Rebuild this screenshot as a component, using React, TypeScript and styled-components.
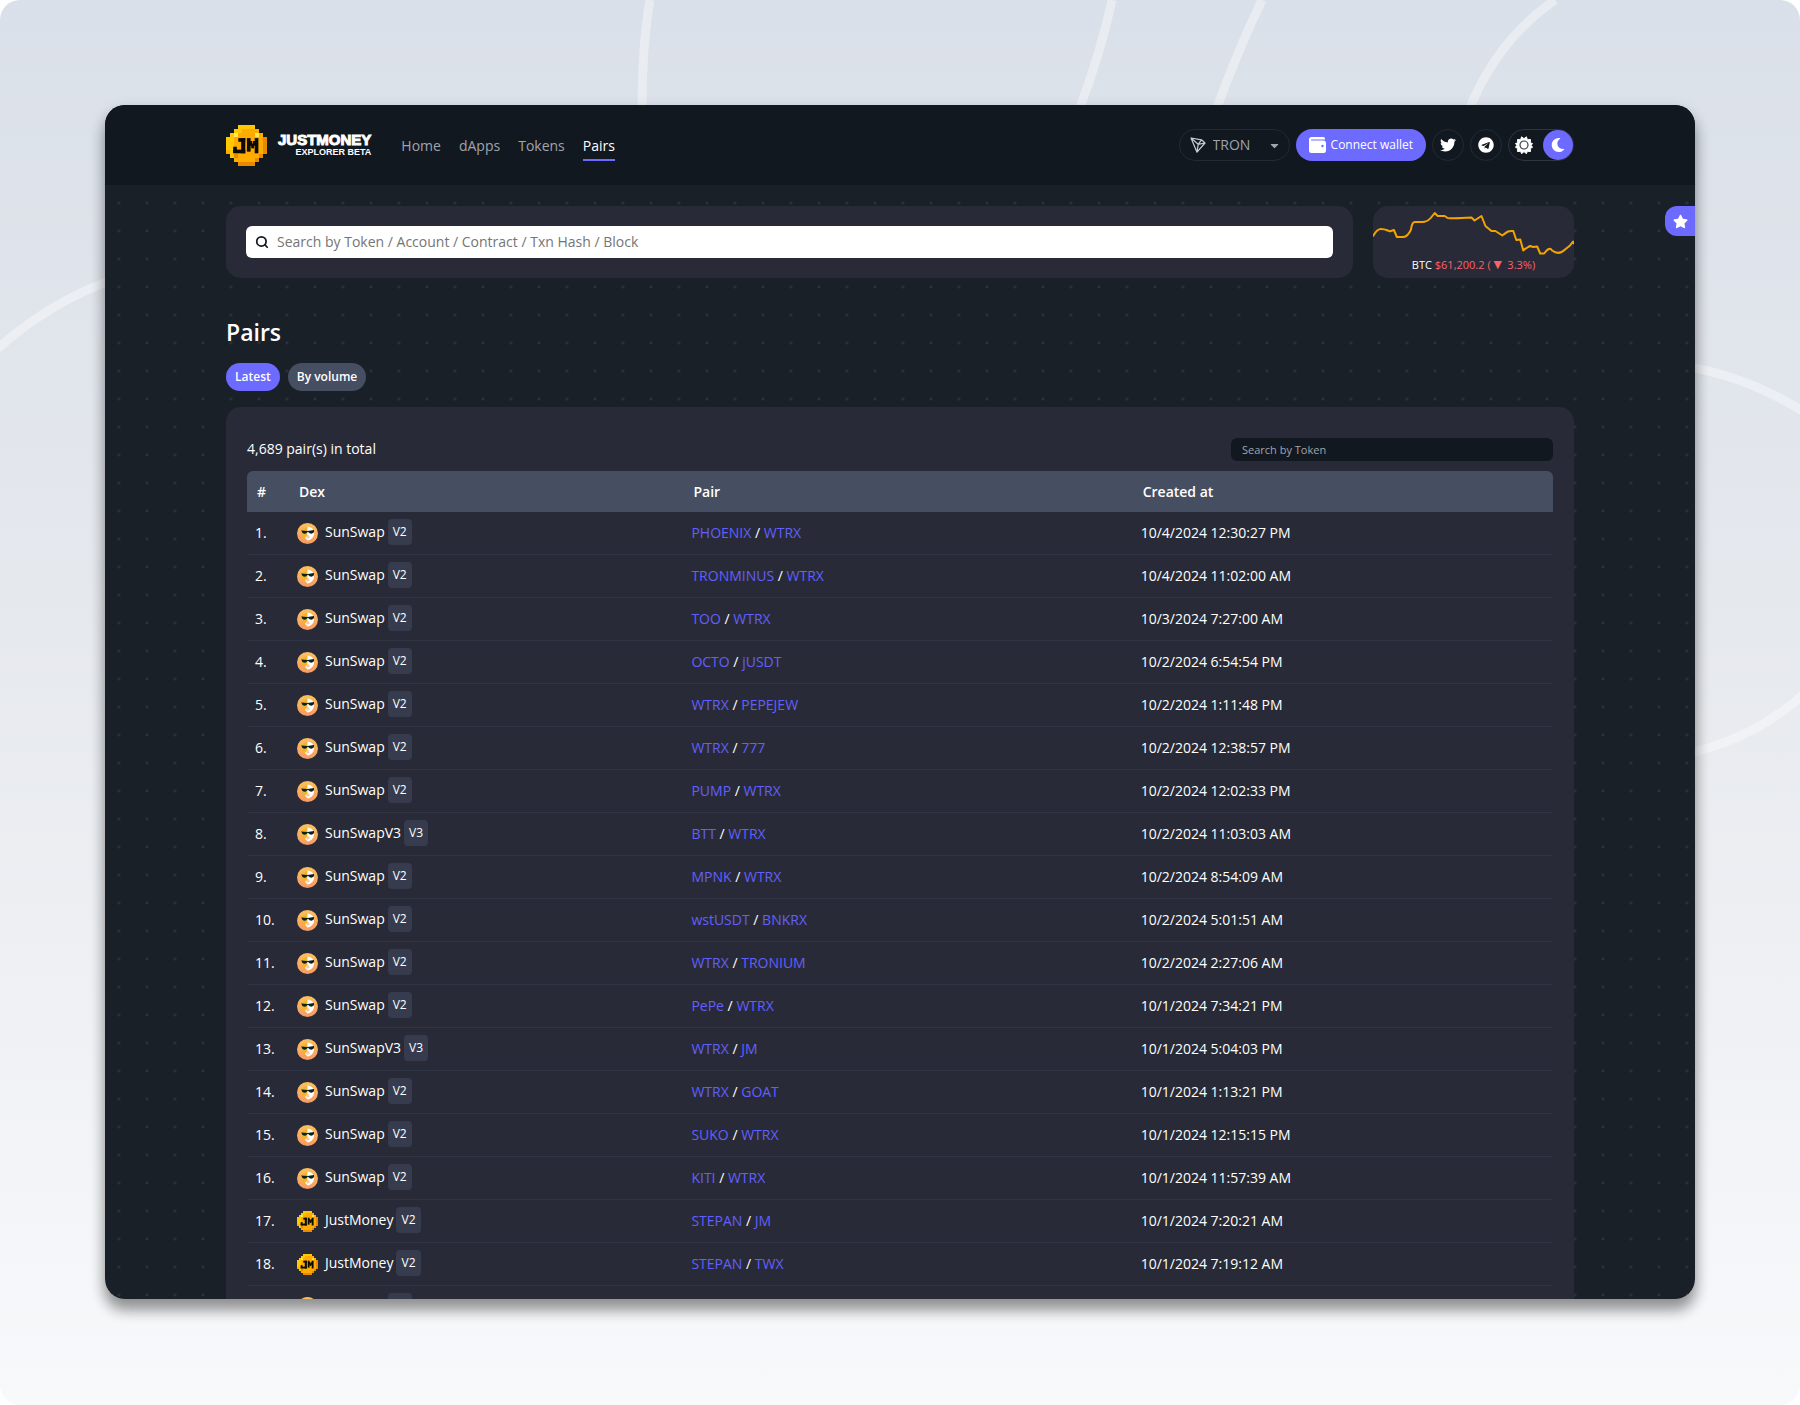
import React from "react";
import styled, { createGlobalStyle } from "styled-components";
import { FaTwitter, FaTelegram, FaMoon, FaStar, FaCaretDown } from "react-icons/fa";
import { Search } from "lucide-react";

const Global = createGlobalStyle`
  * { box-sizing: border-box; }
  html { background: #fff; }
  body { margin: 0; font-family: "Open Sans", "Noto Sans", sans-serif; font-size: 14px; line-height: 20px; color: #fff; }
  button, input, select { font: inherit; }
  a { text-decoration: none; }
`;

const Backdrop = styled.div`
  position: relative;
  overflow: hidden;
  height: 100vh;
  padding: 105px 105px 106px;
  border-radius: 20px;
  background: linear-gradient(180deg, #dae0e9 0%, #e6e9ee 45%, #f8f9fb 100%);
`;

const Waves = styled.svg`
  position: absolute;
  inset: 0;
  width: 100%;
  height: 100%;
`;

const WindowShadow = styled.div`
  position: relative;
  height: 100%;
  border-radius: 20px;
  box-shadow: 0 12px 14px rgba(0, 0, 0, 0.3), 0 6px 16px rgba(0, 0, 0, 0.2);
`;

const Window = styled.div`
  position: relative;
  height: 100%;
  overflow: hidden;
  border-radius: 20px;
  background-color: #1a2028;
  background-image: radial-gradient(circle, #29303b 1px, transparent 2px);
  background-size: 28px 28px;
  background-position: 0 84px;
`;

const Header = styled.header`
  height: 80px;
  padding: 0 121px;
  display: flex;
  align-items: center;
  justify-content: space-between;
  background: #121820;
`;

const HeaderGroup = styled.div<{ $gap: number }>`
  display: flex;
  align-items: center;
  gap: ${(p) => p.$gap}px;
`;

const Brand = styled.a`
  display: flex;
  align-items: center;
  gap: 11px;
  color: #fff;
`;

const Wordmark = styled.span`
  display: flex;
  flex-direction: column;
  align-items: flex-end;
  font-family: "Liberation Sans", Arial, sans-serif;
  font-weight: 700;
`;

const WordTop = styled.span`
  font-size: 15px;
  line-height: 14px;
  -webkit-text-stroke: 1px #fff;
`;

const WordSub = styled.span`
  font-size: 9px;
  line-height: 11px;
`;

const Nav = styled.nav`
  display: flex;
  gap: 18px;
`;

const NavLink = styled.a<{ $active?: boolean }>`
  padding: 6px 0 3px;
  color: ${(p) => (p.$active ? "#fff" : "#a0a4ad")};
  border-bottom: 2px solid ${(p) => (p.$active ? "#6c6aff" : "transparent")};
`;

const ChainBox = styled.label`
  display: flex;
  align-items: center;
  width: 111px;
  height: 32px;
  padding: 0 8px 0 10px;
  border: 1px solid #242a33;
  border-radius: 16px;
  color: #a0a4ad;
`;

const ChainSelect = styled.select`
  flex: 1;
  min-width: 0;
  margin-left: 7px;
  padding: 0;
  border: 0;
  outline: 0;
  appearance: none;
  background: transparent;
  color: inherit;
`;

const WalletButton = styled.button`
  display: flex;
  align-items: center;
  gap: 5px;
  height: 32px;
  padding: 0 13px;
  border: 0;
  border-radius: 16px;
  background: #6c6aff;
  color: #fff;
  font-size: 12px;
`;

const RoundLink = styled.a`
  display: flex;
  align-items: center;
  justify-content: center;
  width: 32px;
  height: 32px;
  border: 1px solid #242a33;
  border-radius: 50%;
  color: #fff;
`;

const ThemeSwitch = styled.div`
  display: flex;
  align-items: center;
  justify-content: space-between;
  width: 66px;
  height: 32px;
  border: 1px solid #303640;
  border-radius: 16px;
`;

const ThemeButton = styled.button<{ $on?: boolean }>`
  display: flex;
  align-items: center;
  justify-content: center;
  width: 30px;
  height: 30px;
  padding: 0;
  border: 0;
  border-radius: 50%;
  background: ${(p) => (p.$on ? "#6c6aff" : "transparent")};
  color: #fff;
`;

const Main = styled.main`
  padding: 21px 121px 0;
`;

const TopRow = styled.div`
  display: flex;
  gap: 20px;
`;

const SearchCard = styled.form`
  flex: 1;
  height: 72px;
  padding: 20px;
  border-radius: 15px;
  background: #282b37;
`;

const SearchBox = styled.label`
  display: flex;
  align-items: center;
  gap: 8px;
  height: 32px;
  padding: 0 9px;
  border-radius: 6px;
  background: #fff;
  color: #151a22;
`;

const SearchInput = styled.input`
  flex: 1;
  padding: 0;
  border: 0;
  outline: 0;
  background: transparent;
  color: #151a22;
  &::placeholder { color: #757575; opacity: 1; }
`;

const TickerCard = styled.div`
  display: flex;
  flex-direction: column;
  width: 201px;
  height: 72px;
  border-radius: 15px;
  overflow: hidden;
  background: #282b37;
  font-size: 11px;
  line-height: 18px;
  text-align: center;
`;

const Down = styled.span`
  color: #ff5f68;
`;

const Triangle = styled.span`
  font-size: 14px;
  line-height: 14px;
`;

const FavTab = styled.button`
  position: absolute;
  top: 101px;
  right: 0;
  display: flex;
  align-items: center;
  justify-content: center;
  width: 30px;
  height: 30px;
  padding: 0;
  border: 0;
  border-radius: 12px 0 0 12px;
  background: #6c6aff;
  color: #fff;
`;

const Title = styled.h1`
  margin: 37px 0 14px;
  font-size: 23px;
  line-height: 34px;
  font-weight: 600;
`;

const Tabs = styled.div`
  display: flex;
  gap: 8px;
  margin-bottom: 16px;
`;

const Tab = styled.button<{ $active?: boolean }>`
  height: 28px;
  padding: 0 9px;
  border: 0;
  border-radius: 14px;
  background: ${(p) => (p.$active ? "#6c6aff" : "#464e62")};
  color: #fff;
  font-size: 12px;
  font-weight: 600;
`;

const Panel = styled.section`
  padding: 30px 21px;
  border-radius: 15px;
  background: #282b37;
`;

const PanelHead = styled.div`
  display: flex;
  align-items: center;
  justify-content: space-between;
  height: 24px;
  margin-bottom: 10px;
`;

const TokenInput = styled.input`
  width: 322px;
  height: 23px;
  padding: 0 11px;
  border: 0;
  outline: 0;
  border-radius: 6px;
  background: #121820;
  color: #fff;
  font-size: 11px;
  &::placeholder { color: #a0a4ad; opacity: 1; }
`;

const Table = styled.table`
  width: 100%;
  table-layout: fixed;
  border-collapse: separate;
  border-spacing: 0;
`;

const Th = styled.th<{ $w?: string }>`
  width: ${(p) => p.$w ?? "auto"};
  height: 41px;
  padding: 0 10px;
  background: #464e62;
  font-weight: 600;
  text-align: left;
  &:first-child { border-top-left-radius: 6px; }
  &:last-child { border-top-right-radius: 6px; }
`;

const Td = styled.td`
  height: 43px;
  padding: 0 8px;
  border-bottom: 1px solid #30354a;
  border-bottom-color: #303543;
  white-space: nowrap;
`;

const Dex = styled.div`
  display: flex;
  align-items: center;
`;

const DexName = styled.span`
  margin: 0 3px 2px 7px;
`;

const Version = styled.span`
  height: 26px;
  margin-bottom: 2px;
  padding: 0 5px;
  border-radius: 4px;
  background: #363c4e;
  font-size: 12px;
  line-height: 26px;
`;

const TokenLink = styled.a`
  color: #625fff;
`;

const JMCoin = ({ size }: { size: number }) => (
  <svg width={size} height={size} viewBox="0 0 20 20" aria-hidden="true">
    <g shapeRendering="crispEdges">
      <path fill="#ffab00" d="M6 0h8v2h2v2h2v2h2v8h-2v2h-2v2h-2v2H6v-2H4v-2H2v-2H0V6h2V4h2V2h2z" />
      <path fill="#ffc800" d="M6 0h8v2H6zM4 2h4v2H6v2H4v8H2v2h2v-2H2v-2H0V6h2V4h2z" />
      <path fill="#e88a00" d="M18 6h2v8h-2v2h-2v2h-2v2H6v-2h8v-2h2v-2h2zM4 14h2v2H4z" />
      <path fill="#ffe94d" d="M4 4h2v2H4zM14 4h2v2h-2z" />
    </g>
    <g fill="#0b0b0b">
      <rect x="6" y="6.400" width="3.400" height="1.800" />
      <rect x="7.400" y="6.400" width="2" height="7.400" />
      <rect x="3.500" y="12" width="5.900" height="1.800" />
      <rect x="3.500" y="10.600" width="1.800" height="3" />
      <rect x="10.200" y="6.400" width="1.800" height="6.600" />
      <rect x="14" y="6.400" width="1.800" height="7.400" />
      <rect x="11.400" y="7.800" width="1.400" height="2.400" />
      <rect x="13.200" y="7.800" width="1.400" height="2.400" />
      <rect x="12.300" y="9" width="1.400" height="2.400" />
    </g>
  </svg>
);

const SunSwapLogo = () => (
  <svg width="21" height="21" viewBox="0 0 21 21" aria-hidden="true">
    <defs>
      <linearGradient id="sun" x1="0" y1="0" x2="0" y2="1">
        <stop offset="0" stopColor="#fcc15c" />
        <stop offset="1" stopColor="#f79a63" />
      </linearGradient>
    </defs>
    <circle cx="10.500" cy="10.500" r="10.500" fill="url(#sun)" />
    <path fill="#f4b32c" d="M10.500 3.500L5 6.500v6l3 4 2.500-2z" />
    <path fill="#fff" d="M10.500 3.500c4 .3 6.500 3 6.500 6.800 0 4-3 6.700-6.500 7.200L8 14.800l2.500-2z" />
    <path fill="#ffc9a0" d="M8.500 13.500l3-1.500 1.500 2.200-2.500 1.800z" />
    <path fill="#07231f" d="M4 7.500l6.500.6 6.500-1.100v1.500c-.3 2.300-4 3-5.500.8l-1-.5c-1.200 2.700-5.400 2.300-5.700-.3z" />
  </svg>
);

const TronLogo = () => (
  <svg width="16" height="16" viewBox="0 0 16 16" fill="none" stroke="#c9ccd2" strokeWidth="1.200" strokeLinejoin="round" aria-hidden="true">
    <path d="M1 1l10.500 1.800L15 6 7 15.200zM1 1l7.200 6.300L7 15.200M8.200 7.300l3.300-4.500M8.200 7.300L15 6" />
  </svg>
);

const WalletIcon = () => (
  <svg width="17" height="16" viewBox="0 0 17 16" aria-hidden="true">
    <path fill="#fff" d="M2.500 0h12A1.500 1.500 0 0 1 16 1.500v1H2.500a.5.5 0 0 0 0 1h12A2.500 2.500 0 0 1 17 6v7.500a2.500 2.500 0 0 1-2.500 2.500h-12A2.500 2.500 0 0 1 0 13.500v-11A2.500 2.500 0 0 1 2.500 0z" />
    <circle cx="13.500" cy="9" r="1.200" fill="#6c6aff" />
  </svg>
);

const SunIcon = () => (
  <svg width="18" height="18" viewBox="0 0 18 18" aria-hidden="true">
    <path fill="#fff" stroke="#fff" strokeLinejoin="round" d="M9 2.700l2.400-1.900 1 2.900 3.100-.2-.2 3.100 2.300 1.100L15.800 9l1.800 2.300-2.300 1.100.2 3.100-3.100-.2-1 2.400L9 15.600l-2.400 2.100-1-2.400-3.100.2.200-3.100L.4 11.300 2.200 9 .4 7.700l2.300-1.100-.2-3.100 3.100.2 1-2.900z" />
    <circle cx="9" cy="9" r="4" fill="#fff" stroke="#3a404a" strokeWidth="1.200" />
  </svg>
);

const Sparkline = () => (
  <svg width="100%" height="50" viewBox="0 0 202 50" preserveAspectRatio="none" aria-hidden="true">
    <path
      fill="none"
      stroke="#f5a300"
      strokeWidth="2"
      strokeLinejoin="round"
      strokeLinecap="round"
      d="M0 30c2-3 4-7 8-7 6 0 8 3 10 2l3-1 3 7h7c4-1 6-5 7-7 1-4 1-8 4-8 6 0 12 1 16-4l4-5 3 3h7l3 2c8 .5 16 0 24-.5l3 3 7-4.500 4 10 6 5h4l7 4.500c5-4 6-5 11-4.500l3 9 4-.5 3 11c3-3 4-3 7-4.500l3 1 4-.5 3 7h4c4-5 6-6 8-3 4 3 8 4 13-1l5-4 3-4 2.500 4"
    />
  </svg>
);

type Row = [dex: string, a: string, b: string, created: string];

const rows: Row[] = [
  ["SunSwap", "PHOENIX", "WTRX", "10/4/2024 12:30:27 PM"],
  ["SunSwap", "TRONMINUS", "WTRX", "10/4/2024 11:02:00 AM"],
  ["SunSwap", "TOO", "WTRX", "10/3/2024 7:27:00 AM"],
  ["SunSwap", "OCTO", "jUSDT", "10/2/2024 6:54:54 PM"],
  ["SunSwap", "WTRX", "PEPEJEW", "10/2/2024 1:11:48 PM"],
  ["SunSwap", "WTRX", "777", "10/2/2024 12:38:57 PM"],
  ["SunSwap", "PUMP", "WTRX", "10/2/2024 12:02:33 PM"],
  ["SunSwapV3", "BTT", "WTRX", "10/2/2024 11:03:03 AM"],
  ["SunSwap", "MPNK", "WTRX", "10/2/2024 8:54:09 AM"],
  ["SunSwap", "wstUSDT", "BNKRX", "10/2/2024 5:01:51 AM"],
  ["SunSwap", "WTRX", "TRONIUM", "10/2/2024 2:27:06 AM"],
  ["SunSwap", "PePe", "WTRX", "10/1/2024 7:34:21 PM"],
  ["SunSwapV3", "WTRX", "JM", "10/1/2024 5:04:03 PM"],
  ["SunSwap", "WTRX", "GOAT", "10/1/2024 1:13:21 PM"],
  ["SunSwap", "SUKO", "WTRX", "10/1/2024 12:15:15 PM"],
  ["SunSwap", "KITI", "WTRX", "10/1/2024 11:57:39 AM"],
  ["JustMoney", "STEPAN", "JM", "10/1/2024 7:20:21 AM"],
  ["JustMoney", "STEPAN", "TWX", "10/1/2024 7:19:12 AM"],
  ["SunSwap", "", "", ""],
];

const navItems = ["Home", "dApps", "Tokens", "Pairs"];

export default function App() {
  return (
    <>
      <Global />
      <Backdrop>
        <Waves viewBox="0 0 1800 1405" preserveAspectRatio="none" fill="none" stroke="#fff" strokeOpacity="0.38" strokeWidth="9" aria-hidden="true">
          <path d="M650 0Q642 45 642 110M1112 0Q1100 55 1079 110M1262 0Q1238 50 1216 110M1555 0Q1497 40 1469 110M-4 350Q50 302 112 280M1690 367Q1750 378 1804 412M1690 753Q1755 738 1804 694" />
        </Waves>
        <WindowShadow>
          <Window>
            <Header>
              <HeaderGroup $gap={30}>
                <Brand href="#">
                  <JMCoin size={41} />
                  <Wordmark>
                    <WordTop>JUSTMONEY</WordTop>
                    <WordSub>EXPLORER BETA</WordSub>
                  </Wordmark>
                </Brand>
                <Nav>
                  {navItems.map((item) => (
                    <NavLink key={item} href="#" $active={item === "Pairs"}>{item}</NavLink>
                  ))}
                </Nav>
              </HeaderGroup>
              <HeaderGroup $gap={6}>
                <ChainBox>
                  <TronLogo />
                  <ChainSelect aria-label="Network"><option>TRON</option></ChainSelect>
                  <FaCaretDown size={13} />
                </ChainBox>
                <WalletButton type="button"><WalletIcon />Connect wallet</WalletButton>
                <RoundLink href="#" aria-label="Twitter"><FaTwitter size={16} /></RoundLink>
                <RoundLink href="#" aria-label="Telegram"><FaTelegram size={16} /></RoundLink>
                <ThemeSwitch>
                  <ThemeButton type="button" aria-label="Light theme"><SunIcon /></ThemeButton>
                  <ThemeButton type="button" aria-label="Dark theme" $on><FaMoon size={14} /></ThemeButton>
                </ThemeSwitch>
              </HeaderGroup>
            </Header>
            <FavTab type="button" aria-label="Favourites"><FaStar size={15} /></FavTab>
            <Main>
              <TopRow>
                <SearchCard>
                  <SearchBox>
                    <Search size={14} strokeWidth={3} />
                    <SearchInput aria-label="Search" placeholder="Search by Token / Account / Contract / Txn Hash / Block" />
                  </SearchBox>
                </SearchCard>
                <TickerCard>
                  <Sparkline />
                  <div>BTC <Down>$61,200.2 (<Triangle>▼</Triangle> 3.3%)</Down></div>
                </TickerCard>
              </TopRow>
              <Title>Pairs</Title>
              <Tabs>
                <Tab type="button" $active>Latest</Tab>
                <Tab type="button">By volume</Tab>
              </Tabs>
              <Panel>
                <PanelHead>
                  <span>4,689 pair(s) in total</span>
                  <TokenInput aria-label="Search by Token" placeholder="Search by Token" />
                </PanelHead>
                <Table>
                  <thead>
                    <tr>
                      <Th $w="42px">#</Th>
                      <Th $w="30.2%">Dex</Th>
                      <Th $w="34.4%">Pair</Th>
                      <Th>Created at</Th>
                    </tr>
                  </thead>
                  <tbody>
                    {rows.map(([dex, a, b, created], i) => (
                      <tr key={i}>
                        <Td>{i + 1}.</Td>
                        <Td>
                          <Dex>
                            {dex === "JustMoney" ? <JMCoin size={21} /> : <SunSwapLogo />}
                            <DexName>{dex}</DexName>
                            <Version>{dex === "SunSwapV3" ? "V3" : "V2"}</Version>
                          </Dex>
                        </Td>
                        <Td>{a && <><TokenLink href="#">{a}</TokenLink> / <TokenLink href="#">{b}</TokenLink></>}</Td>
                        <Td>{created}</Td>
                      </tr>
                    ))}
                  </tbody>
                </Table>
              </Panel>
            </Main>
          </Window>
        </WindowShadow>
      </Backdrop>
    </>
  );
}
